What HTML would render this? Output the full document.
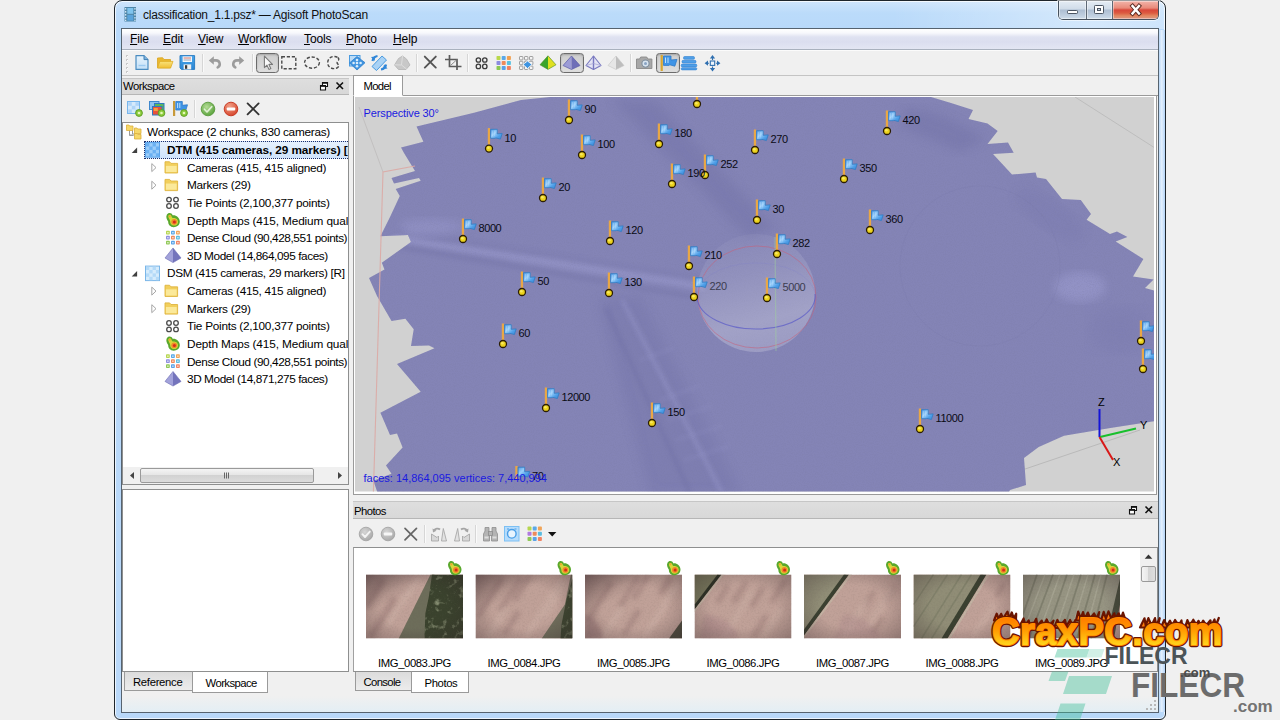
<!DOCTYPE html>
<html lang="en">
<head>
<meta charset="utf-8">
<title>classification_1.1.psz* — Agisoft PhotoScan</title>
<style>
html,body{margin:0;padding:0;}
body{width:1280px;height:720px;overflow:hidden;position:relative;background:#f0f0f0;font-family:"Liberation Sans",sans-serif;font-size:12px;color:#000;}
.a{position:absolute;}
.t{position:absolute;white-space:nowrap;line-height:14px;}
svg{position:absolute;overflow:visible;}
/* window frame */
#win{left:114px;top:0;width:1052px;height:720px;box-sizing:border-box;border:1px solid #1e252b;border-radius:8px 8px 6px 6px;background:linear-gradient(90deg,rgba(255,255,255,0) 74%,rgba(255,255,255,.38) 93%,rgba(255,255,255,.3) 100%) 0 0/100% 28px no-repeat,linear-gradient(#cfe5fc 0,#bbdbfa 12px,#b8d9fa 28px,#b9d8f9 100%);box-shadow:inset 0 0 0 1px rgba(255,255,255,.75);overflow:hidden;}
#client{left:121px;top:28px;width:1038px;height:685px;box-sizing:border-box;border:1px solid #56636f;background:#f0f0f0;}
#menubar{left:122px;top:29px;width:1036px;height:20px;background:linear-gradient(#ffffff 0,#f7f8fc 4px,#dfe2f1 8px,#dbdeef 13px,#e3e6f3 20px);border-bottom:1px solid #a9b1be;box-shadow:0 1px 0 #fbfbfb;}
.menu{top:32px;font-size:12px;letter-spacing:-.1px;}
.menu u{text-decoration:underline;text-underline-offset:1px;}
.sep{width:1px;background:#d6d6d6;border-right:1px solid #fafafa;}
.pressed{box-sizing:border-box;border:1.5px solid #6c6c6c;border-radius:3.5px;background:linear-gradient(#cdcdcd,#dedede);box-shadow:inset 0 1px 2px rgba(0,0,0,.2);}
.dockhead{background:linear-gradient(#dedede,#d8d8d8);border-top:1px solid #c6c6c6;border-bottom:1px solid #b6b6b6;box-sizing:border-box;}
.white{background:#fff;box-sizing:border-box;border:1px solid #8e8f8f;}
.tab{box-sizing:border-box;border:1px solid #9a9a9a;font-size:12px;}
.tab.on{background:#fff;}
.tab.off{background:linear-gradient(#dcdcdc,#ececec);}
.row{left:0;height:18px;font-size:12.2px;}
</style>
</head>
<body>
<!-- ===== window frame ===== -->
<div id="win" class="a"></div>
<div id="rframe" class="a" style="left:1159px;top:30px;width:6px;height:682px;background:linear-gradient(90deg,#b9d8f8,#e4f0fd 45%,#b4d4f7);"></div>
<div id="client" class="a"></div>

<!-- caption buttons -->
<div class="a" style="left:1058px;top:1px;width:101px;height:19px;box-sizing:border-box;border:1px solid #46515e;border-top:none;border-radius:0 0 5px 5px;overflow:hidden;background:#c6d4e4;box-shadow:0 0 0 1px rgba(255,255,255,.55);">
<div class="a" style="left:0;top:0;width:27px;height:18px;background:linear-gradient(#e4ecf4 0,#d0dce9 8px,#adbed2 9px,#bacadc 13px,#cedcea 18px);border-right:1px solid #5d6875;box-shadow:inset 0 0 0 1px rgba(255,255,255,.45);"></div>
<div class="a" style="left:28px;top:0;width:25px;height:18px;background:linear-gradient(#e4ecf4 0,#d0dce9 8px,#adbed2 9px,#bacadc 13px,#cedcea 18px);border-right:1px solid #5d6875;box-shadow:inset 0 0 0 1px rgba(255,255,255,.45);"></div>
<div class="a" style="left:54px;top:0;width:46px;height:18px;background:linear-gradient(#f2b4aa 0,#e98a7a 7px,#d8473a 9px,#dc5a40 12px,#e28a62 15px,#dc9484 18px);box-shadow:inset 0 0 0 1px rgba(255,255,255,.4);"></div>
</div>
<svg class="a" style="left:1058px;top:0;" width="101" height="20" viewBox="1058 0 101 20"><rect x="1067.5" y="10.5" width="10" height="3" rx=".8" fill="#fff" stroke="#4a5462" stroke-width="1"/><rect x="1094.5" y="5.5" width="9" height="8" rx=".8" fill="#fff" stroke="#4a5462" stroke-width="1"/><rect x="1097.5" y="8.5" width="3" height="2" fill="#c9d6e4" stroke="#4a5462" stroke-width="1"/><path d="M1132.5 6l6.5 7.500M1139 6l-6.5 7.5" stroke="#5a2a22" stroke-width="4.2" stroke-linecap="square"/><path d="M1132.5 6l6.5 7.500M1139 6l-6.5 7.5" stroke="#fff" stroke-width="2.4" stroke-linecap="square"/></svg>
<!-- app icon (film strip) -->
<svg class="a" style="left:124px;top:6px;" width="13" height="16" viewBox="124 6 13 16"><rect x="124.5" y="7" width="11.5" height="14.5" fill="#4f86a8"/><rect x="127.3" y="8" width="6" height="5.8" fill="#7fc4ee"/><rect x="127.3" y="14.8" width="6" height="5.8" fill="#5aa4dc"/><g fill="#cfe4f2"><rect x="125" y="8" width="1.3" height="1.6"/><rect x="125" y="11" width="1.3" height="1.6"/><rect x="125" y="14" width="1.3" height="1.6"/><rect x="125" y="17" width="1.3" height="1.6"/><rect x="125" y="19.7" width="1.3" height="1.3"/><rect x="134.3" y="8" width="1.3" height="1.6"/><rect x="134.3" y="11" width="1.3" height="1.6"/><rect x="134.3" y="14" width="1.3" height="1.6"/><rect x="134.3" y="17" width="1.3" height="1.6"/><rect x="134.3" y="19.7" width="1.3" height="1.3"/></g></svg>
<!-- title bar -->
<div class="t" style="left:143px;top:8px;font-size:12px;letter-spacing:-.23px;color:#111;">classification_1.1.psz* — Agisoft PhotoScan</div>

<!-- menubar -->
<div id="menubar" class="a"></div>
<div class="t menu" style="left:130px;"><u>F</u>ile</div>
<div class="t menu" style="left:163px;"><u>E</u>dit</div>
<div class="t menu" style="left:198px;"><u>V</u>iew</div>
<div class="t menu" style="left:238px;"><u>W</u>orkflow</div>
<div class="t menu" style="left:304px;"><u>T</u>ools</div>
<div class="t menu" style="left:346px;"><u>P</u>hoto</div>
<div class="t menu" style="left:393px;"><u>H</u>elp</div>

<!-- main toolbar line -->
<div class="a" style="left:122px;top:75px;width:1036px;height:1px;background:#c4c4c4;"></div>
<div class="a sep" style="left:202px;top:54px;height:18px;"></div>
<div class="a sep" style="left:252px;top:54px;height:18px;"></div>
<div class="a sep" style="left:416px;top:54px;height:18px;"></div>
<div class="a sep" style="left:467px;top:54px;height:18px;"></div>
<div class="a sep" style="left:630px;top:54px;height:18px;"></div>
<div class="a pressed" style="left:256px;top:53px;width:23px;height:20px;"></div>
<div class="a pressed" style="left:560px;top:53px;width:24px;height:20px;"></div>
<div class="a pressed" style="left:656px;top:53px;width:24px;height:20px;"></div>
<svg class="a" style="left:122px;top:50px;" width="620" height="26" viewBox="122 50 620 26">
<defs>
<linearGradient id="gDoc" x1="0" y1="0" x2="0" y2="1"><stop offset="0" stop-color="#e6f3fd"/><stop offset="1" stop-color="#c3e0f7"/></linearGradient>
<linearGradient id="gFold" x1="0" y1="0" x2="0" y2="1"><stop offset="0" stop-color="#f9e27a"/><stop offset="1" stop-color="#f0bf35"/></linearGradient>
<linearGradient id="gBlue" x1="0" y1="0" x2="0" y2="1"><stop offset="0" stop-color="#4aa6ea"/><stop offset="1" stop-color="#2a86d4"/></linearGradient>
<linearGradient id="gPur" x1="0" y1="0" x2="1" y2="0"><stop offset="0" stop-color="#9a9ad4"/><stop offset=".5" stop-color="#8484c6"/><stop offset=".5" stop-color="#6c6cb4"/><stop offset="1" stop-color="#7c7cc0"/></linearGradient>
</defs>
<rect x="126" y="55" width="2" height="2" fill="#c9c9c9"/><rect x="127" y="56" width="1" height="1" fill="#fff"/>
<rect x="126" y="59" width="2" height="2" fill="#c9c9c9"/><rect x="127" y="60" width="1" height="1" fill="#fff"/>
<rect x="126" y="63" width="2" height="2" fill="#c9c9c9"/><rect x="127" y="64" width="1" height="1" fill="#fff"/>
<rect x="126" y="67" width="2" height="2" fill="#c9c9c9"/><rect x="127" y="68" width="1" height="1" fill="#fff"/>
<rect x="126" y="71" width="2" height="2" fill="#c9c9c9"/><rect x="127" y="72" width="1" height="1" fill="#fff"/>
<path d="M136 55.6h8l4 4v9.8h-12z" fill="url(#gDoc)" stroke="#4a8cc0" stroke-width="1.2" stroke-linejoin="round"/><path d="M144 55.6v4h4" fill="#7fb2dc" stroke="#3f7fb4" stroke-width="1"/><path d="M138.5 65.5h7" stroke="#9ccaf0" stroke-width="1.4"/>
<path d="M157.5 58v9.8h13V59.5h-6.5l-1.4-1.8z" fill="#eab830" stroke="#d9a520" stroke-width=".8"/><path d="M157.6 68l2.2-6.6h13.2l-2.4 6.6z" fill="url(#gFold)" stroke="#dfae28" stroke-width=".8" stroke-linejoin="round"/>
<path d="M180 55.6h14.6v13.8H181.4L180 68z" fill="url(#gBlue)" stroke="#2f7fc4" stroke-width="1"/><rect x="182.6" y="56.4" width="9.4" height="5.6" fill="#f4f8fc"/><path d="M183.6 58h7.4" stroke="#d06a5a" stroke-width=".9"/><path d="M183.6 60h7.4" stroke="#8a9ab0" stroke-width=".9"/><rect x="183.6" y="64.4" width="7.6" height="5" fill="#f0f0f0"/><rect x="185" y="65.2" width="2.2" height="3.6" fill="#3a3a3a"/>
<path d="M212.5 60.4h3.6a3.7 3.7 0 0 1 1.6 7" fill="none" stroke="#9c9c9c" stroke-width="2.6" stroke-linecap="round"/><path d="M208.8 60.6l5-4.4v8.600z" fill="#9c9c9c"/>
<path d="M240.5 60.4h-3.6a3.7 3.7 0 0 0-1.6 7" fill="none" stroke="#9c9c9c" stroke-width="2.6" stroke-linecap="round"/><path d="M244.200 60.6l-5-4.4v8.600z" fill="#9c9c9c"/>
<path d="M264.4 56.2v11.4l2.6-2.5 1.9 4.3 1.9-.8-1.9-4.2h3.6z" fill="#fafafa" stroke="#7a7a7a" stroke-width="1.1" stroke-linejoin="round"/>
<rect x="281.8" y="56.8" width="14" height="12" fill="none" stroke="#4a4a4a" stroke-width="1.4" stroke-dasharray="3.2 1.8"/>
<ellipse cx="312" cy="62.6" rx="7.4" ry="5.6" fill="none" stroke="#4a4a4a" stroke-width="1.4" stroke-dasharray="3.2 1.8"/>
<path d="M337.5 57.4c-4-2.4-9.6-.2-9.8 5.2-.2 5 5.6 7.6 9.8 5.0 1.4-1 1.8-2.2.6-3.2-1.4-1.2-1.4-2.8 0-3.8 1.2-1 .8-2.4-.6-3.200z" fill="none" stroke="#4a4a4a" stroke-width="1.4" stroke-dasharray="3.2 1.8"/>
<rect x="349.5" y="55.5" width="10.5" height="10.5" fill="#bcdcf7" stroke="#4a9be0" stroke-width="1"/><path d="M357 56.500l8 6.2-8 7.3-7.5-7z" fill="#3f94e0" stroke="#2f7fcb" stroke-width=".8"/><g fill="#d9ecfb"><circle cx="357" cy="60" r="1.3"/><circle cx="353.6" cy="63" r="1.3"/><circle cx="360.6" cy="63" r="1.3"/><circle cx="357" cy="66.2" r="1.3"/><circle cx="357" cy="63" r="1.3"/></g>
<path d="M372 66.500l10-10.5 4.5 4-10 10.500z" fill="#a9d2f5" stroke="#4a9be0" stroke-width="1"/><path d="M372.5 61a6 6 0 0 1 5-5" fill="none" stroke="#2f86d8" stroke-width="2.2"/><path d="M386 64.500a6 6 0 0 1-5 5" fill="none" stroke="#2f86d8" stroke-width="2.2"/><path d="M371 57l4.5-.5-1 4.500z" fill="#2f86d8"/><path d="M387.5 68.500l-4.5.5 1-4.500z" fill="#2f86d8"/>
<path d="M394.5 65l4-6.5 4-2.5 4 3 3.5 6-4 4.500h-7.500z" fill="#c8c8c8" stroke="#b4b4b4" stroke-width=".8"/><path d="M402.5 56l-1 9 5 4M401.5 65l-7-.2" stroke="#dedede" stroke-width="1" fill="none"/>
<path d="M424.8 56.600l11 11M435.8 56.600l-11 11" stroke="#555" stroke-width="1.9" stroke-linecap="round"/>
<path d="M449.5 55v11.500h12M445 59.500h12V70" fill="none" stroke="#5a5a5a" stroke-width="1.7"/><path d="M450.5 65.500l6-5.5" stroke="#8a8a8a" stroke-width="1"/>
<circle cx="478.4" cy="60" r="2.2" fill="none" stroke="#3c3c3c" stroke-width="1.3"/>
<circle cx="478.4" cy="66.4" r="2.2" fill="none" stroke="#3c3c3c" stroke-width="1.3"/>
<circle cx="484.8" cy="60" r="2.2" fill="none" stroke="#3c3c3c" stroke-width="1.3"/>
<circle cx="484.8" cy="66.4" r="2.2" fill="none" stroke="#3c3c3c" stroke-width="1.3"/>
<rect x="496.5" y="56.0" width="4" height="4" rx=".8" fill="#b8d84a"/>
<rect x="501.7" y="56.0" width="4" height="4" rx=".8" fill="#5aa8e8"/>
<rect x="506.9" y="56.0" width="4" height="4" rx=".8" fill="#f0a050"/>
<rect x="496.5" y="61.0" width="4" height="4" rx=".8" fill="#8c8ce0"/>
<rect x="501.7" y="61.0" width="4" height="4" rx=".8" fill="#f08a5a"/>
<rect x="506.9" y="61.0" width="4" height="4" rx=".8" fill="#5ac0e0"/>
<rect x="496.5" y="66.0" width="4" height="4" rx=".8" fill="#8cc850"/>
<rect x="501.7" y="66.0" width="4" height="4" rx=".8" fill="#5aa0e8"/>
<rect x="506.9" y="66.0" width="4" height="4" rx=".8" fill="#f08060"/>
<rect x="519.5" y="56.5" width="3.4" height="3.4" rx=".6" fill="#f4f4f4" stroke="#8a8a8a" stroke-width=".8"/>
<rect x="524.5" y="56.5" width="3.4" height="3.4" rx=".6" fill="#f4f4f4" stroke="#8a8a8a" stroke-width=".8"/>
<rect x="529.5" y="56.5" width="3.4" height="3.4" rx=".6" fill="#f4f4f4" stroke="#8a8a8a" stroke-width=".8"/>
<rect x="519.5" y="61.3" width="3.4" height="3.4" rx=".6" fill="#f4f4f4" stroke="#8a8a8a" stroke-width=".8"/>
<rect x="524.5" y="61.3" width="3.4" height="3.4" rx=".6" fill="#f4f4f4" stroke="#8a8a8a" stroke-width=".8"/>
<rect x="529.5" y="61.3" width="3.4" height="3.4" rx=".6" fill="#f4f4f4" stroke="#8a8a8a" stroke-width=".8"/>
<rect x="519.5" y="66.1" width="3.4" height="3.4" rx=".6" fill="#f4f4f4" stroke="#8a8a8a" stroke-width=".8"/>
<rect x="524.5" y="66.1" width="3.4" height="3.4" rx=".6" fill="#f4f4f4" stroke="#8a8a8a" stroke-width=".8"/>
<rect x="529.5" y="66.1" width="3.4" height="3.4" rx=".6" fill="#f4f4f4" stroke="#8a8a8a" stroke-width=".8"/>
<path d="M523 64.500l4.5-3.5 4.5 3.5-4.5 4z" fill="#3f94e0" stroke="#fff" stroke-width=".8"/>
<path d="M548 55.800l-8 9 8 4.600z" fill="#3aa52a"/><path d="M548 55.800l8 9-8 4.600z" fill="#e0e020"/><path d="M548 55.800l-8 9 8 4.6 8-4.600z" fill="none" stroke="#4a8a20" stroke-width=".6"/>
<path d="M571.5 56l-8.5 9.5 8.5 4z" fill="#9c9cd6"/><path d="M571.5 56l8.5 9.5-8.5 4z" fill="#6e6eb8"/><path d="M571.5 56l-8.5 9.5 8.5 4 8.5-4z" fill="none" stroke="#5a5aa8" stroke-width=".7"/>
<path d="M593.5 56l-7.5 9.5 7.5 4 7.5-4z" fill="#e4e4f4" stroke="#7a7ac0" stroke-width="1.1" stroke-linejoin="round"/><path d="M593.5 56v13.5" stroke="#7a7ac0" stroke-width="1.4"/><path d="M586 65.500l7.5-2 7.5 2" stroke="#a4a4d4" stroke-width=".7" fill="none"/>
<path d="M616 56l-8 9.5 8 4z" fill="#e6e6e6"/><path d="M616 56l8 9.5-8 4z" fill="#bdbdbd"/><path d="M616 56l-8 9.5 8 4 8-4z" fill="none" stroke="#c4c4c4" stroke-width=".6"/>
<path d="M636.5 59h3l1.2-2h6l1.2 2h4v9.500h-15.400z" fill="#a8a8a8" stroke="#8a8a8a" stroke-width=".9"/><circle cx="645.5" cy="63.6" r="3.6" fill="#d8e4f0" stroke="#7e8e9e" stroke-width="1.1"/><circle cx="645.5" cy="63.6" r="1.5" fill="#8aa4c4"/>
<rect x="660.6" y="55" width="2.2" height="16" fill="#d8a630"/><path d="M663.5 56h7.500v4l6-.6-2.2 6.8-5-1.4-.8.600h-5.500z" fill="#3f94e6" stroke="#2f7ac8" stroke-width=".8"/><path d="M665.5 57.500v5.500M668 57.500v5.5" stroke="#bfe0fb" stroke-width="1"/>
<g fill="#4f9fe8" stroke="#2f80d0" stroke-width=".6"><rect x="683.5" y="56.5" width="11" height="2.8" rx="1.2"/><rect x="682" y="60.3" width="14" height="2.8" rx="1.2"/><rect x="681.2" y="64.1" width="15.6" height="2.8" rx="1.2"/><rect x="681.2" y="67.7" width="15.6" height="2.2" rx="1"/></g>
<rect x="710.3" y="61" width="4.4" height="4.4" fill="#eef6fd" stroke="#2f6fb0" stroke-width="1.1"/><g fill="#2f6fb0"><path d="M712.5 55l2.6 3.400h-5.200z"/><path d="M712.5 71.400l2.6-3.400h-5.200z"/><path d="M704.6 63.200l3.4-2.600v5.200z"/><path d="M720.4 63.200l-3.4-2.600v5.200z"/></g><path d="M712.5 57v3M712.5 66.400v3M706.5 63.200h2.500M716 63.200h2.5" stroke="#2f6fb0" stroke-width="1.1"/>
</svg>

<!-- ===== workspace dock ===== -->
<div class="a dockhead" style="left:122px;top:78px;width:227px;height:17px;"></div>
<div class="t" style="left:123px;top:78.5px;font-size:11.3px;letter-spacing:-.53px;">Workspace</div>
<div class="a sep" style="left:194px;top:100px;height:18px;"></div>
<svg class="a" style="left:122px;top:96px;" width="227" height="26" viewBox="122 96 227 26">
<defs><radialGradient id="gGrn" cx=".4" cy=".35" r=".7"><stop offset="0" stop-color="#b4dc96"/><stop offset="1" stop-color="#56a038"/></radialGradient>
<radialGradient id="gRed" cx=".4" cy=".3" r=".8"><stop offset="0" stop-color="#f2a088"/><stop offset="1" stop-color="#d23c22"/></radialGradient>
<g id="plus"><circle r="3.4" fill="#8ccc3c" stroke="#5a9a22" stroke-width=".9"/><circle r="1.3" fill="#e4f6b8"/></g></defs>
<rect x="127.5" y="101.5" width="12" height="12" fill="#d6eafb" stroke="#78b6ec" stroke-width="1"/>
<rect x="128.2" y="102.2" width="3.6" height="3.6" fill="#aed4f8"/>
<rect x="135.4" y="102.2" width="3.6" height="3.6" fill="#aed4f8"/>
<rect x="131.8" y="105.8" width="3.6" height="3.6" fill="#aed4f8"/>
<rect x="128.2" y="109.4" width="3.6" height="3.6" fill="#aed4f8"/>
<rect x="135.4" y="109.4" width="3.6" height="3.6" fill="#aed4f8"/>
<use href="#plus" x="139" y="113"/>
<rect x="149.5" y="101.5" width="9.5" height="8" fill="#8cc4f0" stroke="#3f88cc" stroke-width="1"/><rect x="154.5" y="103.5" width="9.5" height="8" fill="#5ab85a" stroke="#2f78c0" stroke-width="1"/><rect x="152.5" y="106.5" width="9.5" height="8.5" fill="#e8503a" stroke="#2f78c0" stroke-width="1"/><rect x="153.8" y="108" width="4" height="3" fill="#f4a040"/><use href="#plus" x="161.5" y="113"/>
<rect x="173" y="101" width="2.2" height="15" fill="#c89a3a"/><path d="M175.8 101.500h6.500v3.800l5.2-.5-1.8 5.8-4.6-1.2-.8.600h-4.500z" fill="#3f94e6" stroke="#2f7ac8" stroke-width=".8"/><path d="M177.6 103v5M179.8 103v5" stroke="#bfe0fb" stroke-width="1"/><use href="#plus" x="184" y="113"/>
<circle cx="208" cy="109" r="6.8" fill="url(#gGrn)" stroke="#5a9a3e" stroke-width=".9"/><path d="M204.4 109.200l2.6 2.8 4.8-5.4" fill="none" stroke="#eef8e6" stroke-opacity=".85" stroke-width="1.6" stroke-linecap="round" stroke-linejoin="round"/>
<circle cx="231" cy="109" r="6.8" fill="url(#gRed)" stroke="#c4321c" stroke-width=".9"/><rect x="226.8" y="107.5" width="8.4" height="3" rx=".8" fill="#fff"/>
<path d="M247.6 103.400l11 11M258.6 103.400l-11 11" stroke="#333" stroke-width="1.8" stroke-linecap="round"/>
</svg>
<svg class="a" style="left:316px;top:78px;" width="32" height="16" viewBox="316 78 32 16"><path d="M322.5 82.500h5v4h-5zM322.5 83.300h5" fill="#fff" stroke="#111" stroke-width="1.1"/><path d="M320.5 85.500h5v4.500h-5z" fill="#fff" stroke="#111" stroke-width="1.1"/><path d="M320.5 86.300h5" stroke="#111" stroke-width="1.1"/><path d="M336.5 82.500l6.5 6.500M343 82.500l-6.5 6.5" stroke="#111" stroke-width="1.6"/></svg>
<div class="a white" style="left:122px;top:122px;width:227px;height:363px;"></div>
<div class="a" style="left:144px;top:141px;width:204px;height:18px;box-sizing:border-box;background:linear-gradient(#e6f1fd,#cfe3fb);border:1px dotted #1d2f6a;border-right:none;"></div>
<svg class="a" style="left:123px;top:123px;" width="225" height="344" viewBox="123 123 225 344">
<path d="M129.5 130.5v4.500h4M129.5 130.5v5h4" fill="none" stroke="#9a9a9a" stroke-width="1"/><path d="M132.5 127.5v6.500h4.5" fill="none" stroke="#9a9a9a" stroke-width="1"/><path d="M126.5 125.0h2.400l.8 1h3.300v4.500h-6.500z" fill="#f6d868" stroke="#dcae3a" stroke-width=".8"/><path d="M134.5 128.0h2.400l.8 1h3.300v4.500h-6.500z" fill="#f6d868" stroke="#dcae3a" stroke-width=".8"/><path d="M134.5 133.5h2.400l.8 1h3.300v4.500h-6.500z" fill="#f6d868" stroke="#dcae3a" stroke-width=".8"/>
<path d="M137.1 152.9v-5.4l-5.4 5.4z" fill="#404040"/>
<rect x="145.5" y="142.6" width="14" height="14.5" fill="#9accf9" stroke="#58a2ea" stroke-width="1"/><rect x="146.0" y="143.1" width="3.3" height="3.4" fill="#6ab0f2"/><rect x="152.6" y="143.1" width="3.3" height="3.4" fill="#6ab0f2"/><rect x="149.3" y="146.5" width="3.3" height="3.4" fill="#6ab0f2"/><rect x="155.9" y="146.5" width="3.3" height="3.4" fill="#6ab0f2"/><rect x="146.0" y="149.9" width="3.3" height="3.4" fill="#6ab0f2"/><rect x="152.6" y="149.9" width="3.3" height="3.4" fill="#6ab0f2"/><rect x="149.3" y="153.3" width="3.3" height="3.4" fill="#6ab0f2"/><rect x="155.9" y="153.3" width="3.3" height="3.4" fill="#6ab0f2"/>
<path d="M151.8 163.6v8l4.2-4z" fill="#fff" stroke="#a6a6a6" stroke-width="1" stroke-linejoin="round"/>
<path d="M165.0 161.78h4.6l1.4 1.6h6.6v9.6h-12.600z" fill="#f2cf5c" stroke="#dfb440" stroke-width=".9" stroke-linejoin="round"/><path d="M165.9 165.88h10.800v6.200h-10.800z" fill="#fbe99a"/>
<path d="M151.8 181.2v8l4.2-4z" fill="#fff" stroke="#a6a6a6" stroke-width="1" stroke-linejoin="round"/>
<path d="M165.0 179.42000000000002h4.6l1.4 1.6h6.6v9.6h-12.600z" fill="#f2cf5c" stroke="#dfb440" stroke-width=".9" stroke-linejoin="round"/><path d="M165.9 183.52h10.800v6.200h-10.800z" fill="#fbe99a"/>
<circle cx="169.0" cy="199.6" r="2.3" fill="#fff" stroke="#4a4a4a" stroke-width="1.3"/><circle cx="169.0" cy="206.0" r="2.3" fill="#fff" stroke="#4a4a4a" stroke-width="1.3"/><circle cx="176.0" cy="199.6" r="2.3" fill="#fff" stroke="#4a4a4a" stroke-width="1.3"/><circle cx="176.0" cy="206.0" r="2.3" fill="#fff" stroke="#4a4a4a" stroke-width="1.3"/>
<g transform="translate(165.8 212.2)"><path d="M1 2.500c1.5-2.6 5-2 5.8.6 3-.600 7.2 2 7.2 6.2 0 3.6-3 5.7-6 5.7-3.6 0-5.8-2.6-5.6-5.600C1 7.4-.2 4.6 1 2.500z" fill="#5aa82c"/><path d="M2.6 3.400c1-1.4 2.8-.8 3.2.8.6 1.6 1.4 1.6 2.6 1.6 2.4.2 4 2 3.8 4.2-.2 2.2-2 3.4-4 3.4-2.4 0-4-1.8-3.8-4C4.4 7.4 1.8 5.4 2.6 3.400z" fill="#d8d83a"/><circle cx="8.4" cy="9.6" r="2.9" fill="#f08a28"/><circle cx="8.6" cy="9.8" r="1.5" fill="#d82a1c"/><circle cx="3.9" cy="4" r="1" fill="#f0a030"/></g>
<rect x="166.0" y="230.8" width="3.8" height="3.8" rx=".8" fill="#b6d650"/><rect x="167.2" y="232.0" width="1.4" height="1.4" fill="#fff" opacity=".75"/><rect x="171.0" y="230.8" width="3.8" height="3.8" rx=".8" fill="#5aa8e8"/><rect x="172.2" y="232.0" width="1.4" height="1.4" fill="#fff" opacity=".75"/><rect x="176.0" y="230.8" width="3.8" height="3.8" rx=".8" fill="#f0a458"/><rect x="177.2" y="232.0" width="1.4" height="1.4" fill="#fff" opacity=".75"/><rect x="166.0" y="235.8" width="3.8" height="3.8" rx=".8" fill="#8e8ee0"/><rect x="167.2" y="237.0" width="1.4" height="1.4" fill="#fff" opacity=".75"/><rect x="171.0" y="235.8" width="3.8" height="3.8" rx=".8" fill="#ee8a5c"/><rect x="172.2" y="237.0" width="1.4" height="1.4" fill="#fff" opacity=".75"/><rect x="176.0" y="235.8" width="3.8" height="3.8" rx=".8" fill="#5abce0"/><rect x="177.2" y="237.0" width="1.4" height="1.4" fill="#fff" opacity=".75"/><rect x="166.0" y="240.8" width="3.8" height="3.8" rx=".8" fill="#90c856"/><rect x="167.2" y="242.0" width="1.4" height="1.4" fill="#fff" opacity=".75"/><rect x="171.0" y="240.8" width="3.8" height="3.8" rx=".8" fill="#5aa2e8"/><rect x="172.2" y="242.0" width="1.4" height="1.4" fill="#fff" opacity=".75"/><rect x="176.0" y="240.8" width="3.8" height="3.8" rx=".8" fill="#f08464"/><rect x="177.2" y="242.0" width="1.4" height="1.4" fill="#fff" opacity=".75"/>
<path d="M173 247.98000000000002l-8 10 8 4.600z" fill="#a2a2da"/><path d="M173 247.98000000000002l8 10-8 4.600z" fill="#7474bc"/><path d="M173 247.98000000000002l-8 10 8 4.6 8-4.600z" fill="none" stroke="#6a6ab4" stroke-width=".6" stroke-linejoin="round"/>
<path d="M137.1 276.4v-5.4l-5.4 5.4z" fill="#404040"/>
<rect x="145.5" y="266.1" width="14" height="14.5" fill="#d6ecfc" stroke="#7ab6e8" stroke-width="1"/><rect x="146.0" y="266.6" width="3.3" height="3.4" fill="#b4daf8"/><rect x="152.6" y="266.6" width="3.3" height="3.4" fill="#b4daf8"/><rect x="149.3" y="270.0" width="3.3" height="3.4" fill="#b4daf8"/><rect x="155.9" y="270.0" width="3.3" height="3.4" fill="#b4daf8"/><rect x="146.0" y="273.4" width="3.3" height="3.4" fill="#b4daf8"/><rect x="152.6" y="273.4" width="3.3" height="3.4" fill="#b4daf8"/><rect x="149.3" y="276.8" width="3.3" height="3.4" fill="#b4daf8"/><rect x="155.9" y="276.8" width="3.3" height="3.4" fill="#b4daf8"/>
<path d="M151.8 287.1v8l4.2-4z" fill="#fff" stroke="#a6a6a6" stroke-width="1" stroke-linejoin="round"/>
<path d="M165.0 285.26h4.6l1.4 1.6h6.6v9.6h-12.600z" fill="#f2cf5c" stroke="#dfb440" stroke-width=".9" stroke-linejoin="round"/><path d="M165.9 289.36h10.800v6.200h-10.800z" fill="#fbe99a"/>
<path d="M151.8 304.7v8l4.2-4z" fill="#fff" stroke="#a6a6a6" stroke-width="1" stroke-linejoin="round"/>
<path d="M165.0 302.90000000000003h4.6l1.4 1.6h6.6v9.6h-12.600z" fill="#f2cf5c" stroke="#dfb440" stroke-width=".9" stroke-linejoin="round"/><path d="M165.9 307.00000000000006h10.800v6.200h-10.800z" fill="#fbe99a"/>
<circle cx="169.0" cy="323.0" r="2.3" fill="#fff" stroke="#4a4a4a" stroke-width="1.3"/><circle cx="169.0" cy="329.4" r="2.3" fill="#fff" stroke="#4a4a4a" stroke-width="1.3"/><circle cx="176.0" cy="323.0" r="2.3" fill="#fff" stroke="#4a4a4a" stroke-width="1.3"/><circle cx="176.0" cy="329.4" r="2.3" fill="#fff" stroke="#4a4a4a" stroke-width="1.3"/>
<g transform="translate(165.8 335.7)"><path d="M1 2.500c1.5-2.6 5-2 5.8.6 3-.600 7.2 2 7.2 6.2 0 3.6-3 5.7-6 5.7-3.6 0-5.8-2.6-5.6-5.600C1 7.4-.2 4.6 1 2.500z" fill="#5aa82c"/><path d="M2.6 3.400c1-1.4 2.8-.8 3.2.8.6 1.6 1.4 1.6 2.6 1.6 2.4.2 4 2 3.8 4.2-.2 2.2-2 3.4-4 3.4-2.4 0-4-1.8-3.8-4C4.4 7.4 1.8 5.4 2.6 3.400z" fill="#d8d83a"/><circle cx="8.4" cy="9.6" r="2.9" fill="#f08a28"/><circle cx="8.6" cy="9.8" r="1.5" fill="#d82a1c"/><circle cx="3.9" cy="4" r="1" fill="#f0a030"/></g>
<rect x="166.0" y="354.3" width="3.8" height="3.8" rx=".8" fill="#b6d650"/><rect x="167.2" y="355.5" width="1.4" height="1.4" fill="#fff" opacity=".75"/><rect x="171.0" y="354.3" width="3.8" height="3.8" rx=".8" fill="#5aa8e8"/><rect x="172.2" y="355.5" width="1.4" height="1.4" fill="#fff" opacity=".75"/><rect x="176.0" y="354.3" width="3.8" height="3.8" rx=".8" fill="#f0a458"/><rect x="177.2" y="355.5" width="1.4" height="1.4" fill="#fff" opacity=".75"/><rect x="166.0" y="359.3" width="3.8" height="3.8" rx=".8" fill="#8e8ee0"/><rect x="167.2" y="360.5" width="1.4" height="1.4" fill="#fff" opacity=".75"/><rect x="171.0" y="359.3" width="3.8" height="3.8" rx=".8" fill="#ee8a5c"/><rect x="172.2" y="360.5" width="1.4" height="1.4" fill="#fff" opacity=".75"/><rect x="176.0" y="359.3" width="3.8" height="3.8" rx=".8" fill="#5abce0"/><rect x="177.2" y="360.5" width="1.4" height="1.4" fill="#fff" opacity=".75"/><rect x="166.0" y="364.3" width="3.8" height="3.8" rx=".8" fill="#90c856"/><rect x="167.2" y="365.5" width="1.4" height="1.4" fill="#fff" opacity=".75"/><rect x="171.0" y="364.3" width="3.8" height="3.8" rx=".8" fill="#5aa2e8"/><rect x="172.2" y="365.5" width="1.4" height="1.4" fill="#fff" opacity=".75"/><rect x="176.0" y="364.3" width="3.8" height="3.8" rx=".8" fill="#f08464"/><rect x="177.2" y="365.5" width="1.4" height="1.4" fill="#fff" opacity=".75"/>
<path d="M173 371.46l-8 10 8 4.600z" fill="#a2a2da"/><path d="M173 371.46l8 10-8 4.600z" fill="#7474bc"/><path d="M173 371.46l-8 10 8 4.6 8-4.600z" fill="none" stroke="#6a6ab4" stroke-width=".6" stroke-linejoin="round"/>
</svg>
<div class="t" style="left:147px;top:125.3px;width:201px;overflow:hidden;font-size:11.8px;letter-spacing:-0.27px;">Workspace (2 chunks, 830 cameras)</div>
<div class="t" style="left:167px;top:142.9px;width:181px;overflow:hidden;font-size:11.8px;letter-spacing:-0.10px;font-weight:bold;">DTM (415 cameras, 29 markers) [R]</div>
<div class="t" style="left:187px;top:160.6px;width:161px;overflow:hidden;font-size:11.8px;letter-spacing:-0.27px;">Cameras (415, 415 aligned)</div>
<div class="t" style="left:187px;top:178.2px;width:161px;overflow:hidden;font-size:11.8px;letter-spacing:-0.27px;">Markers (29)</div>
<div class="t" style="left:187px;top:195.9px;width:161px;overflow:hidden;font-size:11.8px;letter-spacing:-0.27px;">Tie Points (2,100,377 points)</div>
<div class="t" style="left:187px;top:213.5px;width:161px;overflow:hidden;font-size:11.8px;letter-spacing:-0.12px;">Depth Maps (415, Medium quality)</div>
<div class="t" style="left:187px;top:231.1px;width:161px;overflow:hidden;font-size:11.8px;letter-spacing:-0.42px;">Dense Cloud (90,428,551 points)</div>
<div class="t" style="left:187px;top:248.8px;width:161px;overflow:hidden;font-size:11.8px;letter-spacing:-0.42px;">3D Model (14,864,095 faces)</div>
<div class="t" style="left:167px;top:266.4px;width:181px;overflow:hidden;font-size:11.8px;letter-spacing:-0.36px;">DSM (415 cameras, 29 markers) [R]</div>
<div class="t" style="left:187px;top:284.1px;width:161px;overflow:hidden;font-size:11.8px;letter-spacing:-0.27px;">Cameras (415, 415 aligned)</div>
<div class="t" style="left:187px;top:301.7px;width:161px;overflow:hidden;font-size:11.8px;letter-spacing:-0.27px;">Markers (29)</div>
<div class="t" style="left:187px;top:319.3px;width:161px;overflow:hidden;font-size:11.8px;letter-spacing:-0.27px;">Tie Points (2,100,377 points)</div>
<div class="t" style="left:187px;top:337.0px;width:161px;overflow:hidden;font-size:11.8px;letter-spacing:-0.12px;">Depth Maps (415, Medium quality)</div>
<div class="t" style="left:187px;top:354.6px;width:161px;overflow:hidden;font-size:11.8px;letter-spacing:-0.42px;">Dense Cloud (90,428,551 points)</div>
<div class="t" style="left:187px;top:372.3px;width:161px;overflow:hidden;font-size:11.8px;letter-spacing:-0.42px;">3D Model (14,871,275 faces)</div>
<div class="a" style="left:123px;top:467px;width:225px;height:17px;background:#f0f0f0;"></div>
<div class="a" style="left:140px;top:468px;width:174px;height:15px;box-sizing:border-box;border:1px solid #9a9a9a;border-radius:2px;background:linear-gradient(#f4f4f4 0,#e6e6e6 45%,#d2d2d2 50%,#dcdcdc 100%);"></div>
<svg class="a" style="left:123px;top:467px;" width="225" height="17" viewBox="123 467 225 17"><path d="M130 475.500l4-3.500v7z" fill="#444"/><path d="M342 475.500l-4-3.500v7z" fill="#444"/><path d="M224.5 472.500v6M226.5 472.500v6M228.5 472.500v6" stroke="#666" stroke-width="1"/></svg>
<div class="a white" style="left:122px;top:489px;width:227px;height:183px;"></div>
<div class="a tab off" style="left:124px;top:672px;width:69px;height:19px;border-top:none;"></div>
<div class="t" style="left:133px;top:675px;font-size:11.3px;letter-spacing:-.3px;">Reference</div>
<div class="a tab on" style="left:192px;top:671px;width:76px;height:22px;border-top-color:#8e8f8f;"></div>
<div class="t" style="left:205.5px;top:676px;font-size:11.3px;letter-spacing:-.55px;">Workspace</div>

<!-- ===== model tab ===== -->
<div class="a" style="left:353px;top:95px;width:805px;height:1px;background:#9a9a9a;"></div>
<div class="a tab on" style="left:353px;top:75px;width:50px;height:21px;border-bottom:1px solid #fff;"></div>
<div class="t" style="left:363.5px;top:79px;font-size:11.3px;letter-spacing:-.7px;">Model</div>
<div class="a" style="left:353px;top:96px;width:804px;height:399px;box-sizing:border-box;border:1px solid #9a9a9a;border-top:none;background:#fff;"></div>
<svg class="a" style="left:355px;top:97px;" width="799" height="394.5" viewBox="355 97 799 394.5">
<defs>
<clipPath id="mv"><rect x="355" y="97" width="799" height="394.5"/></clipPath>
<linearGradient id="ball" x1=".3" y1="0" x2=".55" y2="1"><stop offset="0" stop-color="#e8e8f0" stop-opacity=".04"/><stop offset=".35" stop-color="#e8e8f0" stop-opacity=".14"/><stop offset=".75" stop-color="#e8e8f0" stop-opacity=".3"/><stop offset="1" stop-color="#e8e8f0" stop-opacity=".24"/></linearGradient>
<linearGradient id="flg" x1="0" y1="0" x2="1" y2="1"><stop offset="0" stop-color="#4a98e4"/><stop offset=".38" stop-color="#9ccffa"/><stop offset=".7" stop-color="#4f9fe8"/><stop offset="1" stop-color="#3a88d6"/></linearGradient>
<filter id="b2"><feGaussianBlur stdDeviation="2"/></filter>
<filter id="b5"><feGaussianBlur stdDeviation="5"/></filter>
<filter id="b9"><feGaussianBlur stdDeviation="9"/></filter>
<filter id="grain" x="0" y="0" width="1" height="1"><feTurbulence type="fractalNoise" baseFrequency=".9" numOctaves="2" seed="3" result="n"/><feColorMatrix type="matrix" values="0 0 0 0 .2  0 0 0 0 .2  0 0 0 0 .35  0 0 0 -1.6 .9"/></filter>
<g id="mkf"><rect x="-1.2" y="-20.5" width="2.3" height="14" fill="#e8a746"/><path d="M1.6-19.3h6.6v4.6l5-.4-1.8 5.6-4.6-1.2-.6.4H1.6z" fill="url(#flg)" stroke="#2f7cc4" stroke-width=".8"/></g>
<g id="mk"><rect x="-1.2" y="-20.500" width="2.300" height="16.500" fill="#e8a746"/><path d="M1.6-19.300h6.600v4.600l5-.4-1.800 5.600-4.600-1.200-.6.4H1.600z" fill="url(#flg)" stroke="#2f7cc4" stroke-width=".8"/><path d="M3.400-17.900v5.400M5.600-17.900v5.400" stroke="#c4e4fc" stroke-width=".8" opacity=".45"/><circle r="3.5" fill="#ecd21c" stroke="#2b1d05" stroke-width="1.3"/><circle cx="-.6" cy="-.8" r="1.3" fill="#f8e860"/></g>
</defs>
<g clip-path="url(#mv)">
<rect x="355" y="97" width="800" height="396" fill="#d1d1d1"/>
<path d="M1075 97L1155 148" stroke="#bdbdbd" stroke-width="1" fill="none"/>
<path d="M978 485L1140 430" stroke="#b9b9b9" stroke-width="1" fill="none"/>
<path d="M359 107L383 172" stroke="#c2c0c0" stroke-width="1" fill="none"/>
<clipPath id="mesh"><path d="M377.6 493.0L373.4 480.7L391.5 473.8L386.0 465.4L402.6 447.4L397.0 433.5L390.0 435.0L380.4 412.7L420.7 391.8L397.0 364.0L434.5 348.2L429.0 345.4L411.0 346.0L413.7 329.3L405.4 318.8L391.5 321.0L377.0 296.0L369.0 278.0L384.5 269.6L381.8 262.7L411.0 242.0L408.0 235.0L380.4 236.3L390.0 217.0L399.8 196.0L395.7 189.0L420.7 180.7L419.0 178.0L394.0 183.5L391.5 178.0L415.0 171.0L404.0 153.0L401.0 147.4L423.4 141.8L416.5 126.5L474.0 112.7L521.0 100.0L560.0 96.0L927.7 96.0L951.0 103.0L973.0 110.0L968.5 119.0L987.5 123.5L997.7 131.0L987.5 144.0L1008.0 142.5L1013.7 152.7L993.0 154.0L1012.0 174.5L1035.6 172.5L1037.0 177.5L1046.0 179.0L1062.0 199.0L1080.8 200.0L1091.0 214.0L1086.6 219.7L1110.0 234.0L1117.0 231.4L1127.4 237.0L1115.7 241.6L1143.4 259.0L1133.0 276.6L1153.6 279.5L1145.0 288.0L1156.0 291.0L1156.0 421.0L1112.0 427.7L1064.0 435.7L1038.7 447.0L1024.0 458.0L1026.0 485.0L1010.0 490.0L1008.0 494.0Z"/></clipPath>
<path d="M377.6 493.0L373.4 480.7L391.5 473.8L386.0 465.4L402.6 447.4L397.0 433.5L390.0 435.0L380.4 412.7L420.7 391.8L397.0 364.0L434.5 348.2L429.0 345.4L411.0 346.0L413.7 329.3L405.4 318.8L391.5 321.0L377.0 296.0L369.0 278.0L384.5 269.6L381.8 262.7L411.0 242.0L408.0 235.0L380.4 236.3L390.0 217.0L399.8 196.0L395.7 189.0L420.7 180.7L419.0 178.0L394.0 183.5L391.5 178.0L415.0 171.0L404.0 153.0L401.0 147.4L423.4 141.8L416.5 126.5L474.0 112.7L521.0 100.0L560.0 96.0L927.7 96.0L951.0 103.0L973.0 110.0L968.5 119.0L987.5 123.5L997.7 131.0L987.5 144.0L1008.0 142.5L1013.7 152.7L993.0 154.0L1012.0 174.5L1035.6 172.5L1037.0 177.5L1046.0 179.0L1062.0 199.0L1080.8 200.0L1091.0 214.0L1086.6 219.7L1110.0 234.0L1117.0 231.4L1127.4 237.0L1115.7 241.6L1143.4 259.0L1133.0 276.6L1153.6 279.5L1145.0 288.0L1156.0 291.0L1156.0 421.0L1112.0 427.7L1064.0 435.7L1038.7 447.0L1024.0 458.0L1026.0 485.0L1010.0 490.0L1008.0 494.0Z" fill="#8484b6"/>
<g clip-path="url(#mesh)">
<path d="M393 238Q520 258 705 287" fill="none" stroke="#9c9cd0" stroke-width="7" opacity=".5" filter="url(#b2)"/>
<path d="M393 246Q520 268 700 298" fill="none" stroke="#6c6ca2" stroke-width="3" opacity=".45" filter="url(#b2)"/>
<path d="M400 231Q520 249 700 277" fill="none" stroke="#7272a8" stroke-width="2" opacity=".35" filter="url(#b2)"/>
<path d="M400 222Q440 214 470 226Q440 240 404 236Z" fill="#9a9ace" opacity=".5" filter="url(#b5)"/>
<path d="M598 300L640 296L742 493L650 493Z" fill="#7474aa" opacity=".4" filter="url(#b5)"/>
<path d="M622 300L722 493" fill="none" stroke="#9c9cd0" stroke-width="4" opacity=".45" filter="url(#b2)"/>
<path d="M606 308L690 493" fill="none" stroke="#6a6aa0" stroke-width="3" opacity=".4" filter="url(#b2)"/>
<g stroke="#9a9ace" stroke-width="2" opacity=".35" filter="url(#b2)"><path d="M660 400l40-14M668 420l44-14M676 440l46-14M684 460l46-14M640 360l34-12"/></g>
<path d="M612 100L655 100L775 228L748 238Z" fill="#7070a6" opacity=".38" filter="url(#b5)"/>
<path d="M905 108Q950 112 985 140L960 152Q930 138 900 128Z" fill="#7070a6" opacity=".4" filter="url(#b5)"/>
<ellipse cx="1080" cy="287" rx="26" ry="15" fill="#9e9ed2" opacity=".55" filter="url(#b5)"/>
<ellipse cx="1120" cy="330" rx="30" ry="22" fill="#7676ac" opacity=".3" filter="url(#b9)"/>
<ellipse cx="1050" cy="215" rx="40" ry="14" fill="#7878ae" opacity=".3" filter="url(#b5)" transform="rotate(35 1050 215)"/>
<circle cx="980" cy="266" r="80" fill="none" stroke="#7474aa" stroke-width="1" opacity=".16"/>
<rect x="355" y="97" width="800" height="396" filter="url(#grain)" opacity=".3"/>
</g>
<path d="M415 166L383 172L373.4 492" stroke="#dba9a4" stroke-width="1.1" fill="none" opacity=".9"/>
<circle cx="756" cy="293" r="59" fill="url(#ball)"/>
<ellipse cx="757" cy="297" rx="59" ry="51" fill="none" stroke="#c8607a" stroke-width="1" opacity=".55"/>
<path d="M697 298A59 33 0 0 0 815 294" fill="none" stroke="#5a5ac8" stroke-width="1.1" opacity=".7"/>
<path d="M697 298A59 33 0 0 1 815 294" fill="none" stroke="#7a7ad0" stroke-width="1" opacity=".18"/>
<path d="M775 237L776 351" stroke="#9fd39a" stroke-width="1.2" opacity=".45"/>
<use href="#mk" x="569" y="120"/>
<use href="#mk" x="489" y="148.6"/>
<use href="#mk" x="582" y="155"/>
<use href="#mk" x="659" y="144"/>
<use href="#mk" x="697" y="104"/>
<use href="#mk" x="755" y="150"/>
<use href="#mk" x="887" y="131"/>
<use href="#mk" x="672" y="184"/>
<use href="#mk" x="705" y="175"/>
<use href="#mk" x="844" y="179"/>
<use href="#mk" x="543" y="198"/>
<use href="#mk" x="757" y="220"/>
<use href="#mk" x="870" y="230"/>
<use href="#mk" x="463" y="239"/>
<use href="#mk" x="610" y="241"/>
<use href="#mk" x="777" y="254"/>
<use href="#mk" x="689" y="266"/>
<use href="#mk" x="522" y="292"/>
<use href="#mk" x="609" y="293"/>
<use href="#mk" x="694" y="297"/>
<use href="#mk" x="767" y="298"/>
<use href="#mk" x="503" y="344"/>
<use href="#mk" x="1141" y="341"/>
<use href="#mk" x="1143" y="369"/>
<use href="#mk" x="546" y="408"/>
<use href="#mk" x="652" y="423"/>
<use href="#mk" x="920" y="429"/>
<use href="#mkf" x="516.5" y="486.5"/>
<g font-family="'Liberation Sans',sans-serif" font-size="11" letter-spacing="-.45" fill="#0a0a14">
<text x="584.6" y="113.0">90</text>
<text x="504.6" y="141.6">10</text>
<text x="597.6" y="148.0">100</text>
<text x="674.6" y="137.0">180</text>
<text x="770.6" y="143.0">270</text>
<text x="902.6" y="124.0">420</text>
<text x="687.6" y="177.0">190</text>
<text x="720.6" y="168.0">252</text>
<text x="859.6" y="172.0">350</text>
<text x="558.6" y="191.0">20</text>
<text x="772.6" y="213.0">30</text>
<text x="885.6" y="223.0">360</text>
<text x="478.6" y="232.0">8000</text>
<text x="625.6" y="234.0">120</text>
<text x="792.6" y="247.0">282</text>
<text x="704.6" y="259.0">210</text>
<text x="537.6" y="285.0">50</text>
<text x="624.6" y="286.0">130</text>
<text x="709.6" y="290.0" fill="#3c3c50">220</text>
<text x="782.6" y="291.0" fill="#3c3c50">5000</text>
<text x="518.6" y="337.0">60</text>
<text x="561.6" y="401.0">12000</text>
<text x="667.6" y="416.0">150</text>
<text x="935.6" y="422.0">11000</text>
<text x="532.1" y="479.5">70</text>
</g>
<path d="M1099.5 437V409" stroke="#1414d8" stroke-width="2"/><path d="M1100 437L1136 428.5" stroke="#18c02c" stroke-width="2"/><path d="M1099.5 437L1113 460" stroke="#d81818" stroke-width="2"/>
<g font-family="'Liberation Sans',sans-serif" font-size="11" fill="#000"><text x="1098" y="406">Z</text><text x="1140" y="429">Y</text><text x="1113" y="466">X</text></g>
<g font-family="'Liberation Sans',sans-serif" font-size="11" fill="#1a1ae0"><text x="363.5" y="116.6" letter-spacing="-.12">Perspective 30°</text><text x="363.5" y="482">faces: 14,864,095 vertices: 7,440,994</text></g>
</g></svg>

<!-- ===== photos dock ===== -->
<div class="a dockhead" style="left:353px;top:501px;width:805px;height:18px;"></div>
<div class="t" style="left:354px;top:504px;font-size:11.3px;letter-spacing:-.53px;">Photos</div>
<div class="a sep" style="left:424px;top:525px;height:18px;"></div>
<div class="a sep" style="left:475px;top:525px;height:18px;"></div>
<svg class="a" style="left:353px;top:520px;" width="220" height="28" viewBox="353 520 220 28">
<defs><radialGradient id="gGry" cx=".4" cy=".35" r=".75"><stop offset="0" stop-color="#d6d6d6"/><stop offset="1" stop-color="#a4a4a4"/></radialGradient></defs>
<circle cx="366" cy="534" r="6.8" fill="url(#gGry)" stroke="#a0a0a0" stroke-width=".8"/><path d="M362.4 534.200l2.6 2.8 4.8-5.4" fill="none" stroke="#f4f4f4" stroke-width="1.9" stroke-linecap="round" stroke-linejoin="round"/>
<circle cx="388" cy="534" r="6.8" fill="url(#gGry)" stroke="#a0a0a0" stroke-width=".8"/><rect x="383.8" y="532.5" width="8.4" height="3" rx=".8" fill="#f6f6f6"/>
<path d="M405 528.400l11.5 11.500M416.5 528.400l-11.5 11.5" stroke="#666" stroke-width="1.7" stroke-linecap="round"/>
<path d="M431.5 541v-7l5.5 3.5 1.5-1.500V541z" fill="#d8d8d8" stroke="#a8a8a8" stroke-width=".9"/><path d="M441.5 541l1.8-12.5 3.2 12.500z" fill="#e2e2e2" stroke="#a8a8a8" stroke-width=".9"/><path d="M434 530.500a4 4 0 0 1 6-1" fill="none" stroke="#a4a4a4" stroke-width="1.8"/><path d="M432.5 528.500l.5 4 3.5-1.800z" fill="#a4a4a4"/>
<path d="M469.5 541v-7l-5.5 3.5-1.5-1.500V541z" fill="#d8d8d8" stroke="#a8a8a8" stroke-width=".9"/><path d="M459.5 541l-1.8-12.5-3.2 12.500z" fill="#e2e2e2" stroke="#a8a8a8" stroke-width=".9"/><path d="M467 530.500a4 4 0 0 0-6-1" fill="none" stroke="#a4a4a4" stroke-width="1.8"/><path d="M468.5 528.500l-.5 4-3.5-1.800z" fill="#a4a4a4"/>
<g fill="#b4b4b4" stroke="#8e8e8e" stroke-width=".8"><path d="M483.5 541v-7l1.5-3v-3.500h4v3.500l.5 3v7z"/><path d="M491.5 541v-7l.5-3v-3.500h4v3.500l1.5 3v7z"/><rect x="488.5" y="531.5" width="4" height="4"/></g><path d="M484.5 537.500h4M492.5 537.500h4" stroke="#dedede" stroke-width="2"/>
<rect x="504.5" y="526.5" width="14.5" height="14.5" fill="#b6dcfb" stroke="#7cc0f4" stroke-width="1"/><circle cx="511.8" cy="533.8" r="4.3" fill="#e8f4fe" stroke="#4a9fe8" stroke-width="1.4"/><path d="M507 529h2M514.5 529h2" stroke="#4a9fe8" stroke-width="1"/>
<rect x="527.5" y="526.5" width="4" height="4" rx=".9" fill="#b6d650"/>
<rect x="532.7" y="526.5" width="4" height="4" rx=".9" fill="#5aa8e8"/>
<rect x="537.9" y="526.5" width="4" height="4" rx=".9" fill="#f0a458"/>
<rect x="527.5" y="531.7" width="4" height="4" rx=".9" fill="#b07ae0"/>
<rect x="532.7" y="531.7" width="4" height="4" rx=".9" fill="#ee8a5c"/>
<rect x="537.9" y="531.7" width="4" height="4" rx=".9" fill="#5abce0"/>
<rect x="527.5" y="536.9" width="4" height="4" rx=".9" fill="#90c856"/>
<rect x="532.7" y="536.9" width="4" height="4" rx=".9" fill="#5aa2e8"/>
<rect x="537.9" y="536.9" width="4" height="4" rx=".9" fill="#f08464"/>
<path d="M548 532h8.400l-4.2 4.400z" fill="#111"/>
</svg>
<svg class="a" style="left:1126px;top:502px;" width="32" height="16" viewBox="1126 502 32 16"><path d="M1131.5 506.500h5v4h-5z" fill="#fff" stroke="#111" stroke-width="1.1"/><path d="M1131.5 507.300h5" stroke="#111" stroke-width="1.1"/><path d="M1129.5 509.500h5v4.500h-5z" fill="#fff" stroke="#111" stroke-width="1.1"/><path d="M1129.5 510.300h5" stroke="#111" stroke-width="1.1"/><path d="M1145.5 506.500l6.5 6.500M1152 506.500l-6.5 6.5" stroke="#111" stroke-width="1.6"/></svg>
<div class="a white" style="left:353px;top:547px;width:805px;height:125px;border-left-color:#a0a0a0;"></div>
<svg class="a" style="left:354px;top:548px;" width="786" height="123" viewBox="354 548 786 123">
<defs><filter id="tb3" x="-.5" y="-.5" width="2" height="2"><feGaussianBlur stdDeviation="2.6"/></filter>
<radialGradient id="vig" cx=".5" cy=".5" r=".75"><stop offset=".45" stop-color="#2a1c20" stop-opacity="0"/><stop offset="1" stop-color="#2a1c20" stop-opacity=".36"/></radialGradient>
<filter id="tgrain" x="0" y="0" width="1" height="1"><feTurbulence type="fractalNoise" baseFrequency=".55" numOctaves="2" seed="7"/><feColorMatrix type="matrix" values="0 0 0 0 .15  0 0 0 0 .12  0 0 0 0 .1  0 0 0 -2.2 1.2"/></filter>
<clipPath id="tc"><rect width="97" height="64"/></clipPath>
<clipPath id="f0"><path d="M66 0h31v64H58.400l1-25.300 3.300-15.700z"/></clipPath>
<clipPath id="f1"><path d="M97 4V64H85l1-14 5-25z"/></clipPath>
<filter id="tb2" x="-.5" y="-.5" width="2" height="2"><feGaussianBlur stdDeviation="2.300"/></filter>
<filter id="forest" x="0" y="0" width="1" height="1"><feTurbulence type="fractalNoise" baseFrequency=".16" numOctaves="3" seed="11"/><feColorMatrix type="matrix" values="0 0 0 0 .38  0 0 0 0 .42  0 0 0 0 .27  2.200 0 0 0 -1.250"/></filter>
<linearGradient id="vigtl" x1="0" y1="0" x2=".6" y2=".8"><stop offset="0" stop-color="#3a282c" stop-opacity=".42"/><stop offset=".5" stop-color="#3a282c" stop-opacity="0"/></linearGradient></defs>
<g transform="translate(366.0 574.5)" clip-path="url(#tc)"><rect width="97" height="64" fill="#c0a198"/><g filter="url(#tb2)" stroke="#8a6c6a" stroke-width="7" stroke-linecap="round" opacity="0.38"><path d="M6.0 60.0l21.2 -34.0"/><path d="M2.0 30.0l13.8 -22.1"/></g><g filter="url(#tb2)" stroke="#ceb2a8" stroke-width="6" stroke-linecap="round" opacity="0.5"><path d="M22.0 50.0l23.3 -37.4"/><path d="M36.0 30.0l15.9 -25.5"/></g><path d="M64.500 0h4L58.400 64H32.700z" fill="#6d6d5a"/><path d="M66 0h31v64H58.400l1-25.300 3.300-15.700z" fill="#3a422d"/><g clip-path="url(#f0)"><rect width="97" height="64" filter="url(#forest)"/></g><rect width="97" height="64" fill="url(#vig)"/><rect width="97" height="64" fill="url(#vigtl)"/><rect width="97" height="64" filter="url(#tgrain)" opacity=".12"/></g>
<g transform="translate(447.5 560.3)"><path d="M1 2.500c1.5-2.6 5-2 5.8.6 3-.600 7.2 2 7.2 6.2 0 3.6-3 5.7-6 5.7-3.6 0-5.8-2.6-5.6-5.600C1 7.4-.2 4.6 1 2.500z" fill="#5aa82c"/><path d="M2.6 3.400c1-1.4 2.8-.8 3.2.8.6 1.6 1.4 1.6 2.6 1.6 2.4.2 4 2 3.8 4.2-.2 2.2-2 3.4-4 3.4-2.4 0-4-1.8-3.8-4C4.4 7.4 1.8 5.4 2.6 3.400z" fill="#d8d83a"/><circle cx="8.4" cy="9.6" r="2.9" fill="#f08a28"/><circle cx="8.6" cy="9.8" r="1.5" fill="#d82a1c"/><circle cx="3.9" cy="4" r="1" fill="#f0a030"/></g>
<g transform="translate(475.5 574.5)" clip-path="url(#tc)"><rect width="97" height="64" fill="#c0a198"/><g filter="url(#tb2)" stroke="#8a6c6a" stroke-width="6" stroke-linecap="round" opacity="0.36"><path d="M4.0 40.0l21.2 -34.0"/><path d="M26.0 34.0l18.0 -28.9"/><path d="M40.0 24.0l12.7 -20.4"/><path d="M30.0 58.0l11.7 -18.7"/></g><g filter="url(#tb2)" stroke="#ceb2a8" stroke-width="7" stroke-linecap="round" opacity="0.45"><path d="M52.0 60.0l31.8 -51.0"/><path d="M14.0 60.0l15.9 -25.5"/><path d="M70.0 40.0l19.1 -30.6"/></g><path d="M95.400 0H97V64H66.200L89.400 30z" fill="#706e5c"/><path d="M97 4V64H85l1-14 5-25z" fill="#3d4530"/><g clip-path="url(#f1)"><rect width="97" height="64" filter="url(#forest)"/></g><rect width="97" height="64" fill="url(#vig)"/><rect width="97" height="64" fill="url(#vigtl)"/><rect width="97" height="64" filter="url(#tgrain)" opacity=".12"/></g>
<g transform="translate(557.0 560.3)"><path d="M1 2.500c1.5-2.6 5-2 5.8.6 3-.600 7.2 2 7.2 6.2 0 3.6-3 5.7-6 5.7-3.6 0-5.8-2.6-5.6-5.600C1 7.4-.2 4.6 1 2.500z" fill="#5aa82c"/><path d="M2.6 3.400c1-1.4 2.8-.8 3.2.8.6 1.6 1.4 1.6 2.6 1.6 2.4.2 4 2 3.8 4.2-.2 2.2-2 3.4-4 3.4-2.4 0-4-1.8-3.8-4C4.4 7.4 1.8 5.4 2.6 3.400z" fill="#d8d83a"/><circle cx="8.4" cy="9.6" r="2.9" fill="#f08a28"/><circle cx="8.6" cy="9.8" r="1.5" fill="#d82a1c"/><circle cx="3.9" cy="4" r="1" fill="#f0a030"/></g>
<g transform="translate(585.0 574.5)" clip-path="url(#tc)"><rect width="97" height="64" fill="#c0a198"/><g filter="url(#tb2)" stroke="#8a6c6a" stroke-width="6" stroke-linecap="round" opacity="0.36"><path d="M4.0 44.0l21.2 -34.0"/><path d="M36.0 30.0l15.9 -25.5"/><path d="M50.0 22.0l11.7 -18.7"/><path d="M40.0 58.0l12.7 -20.4"/><path d="M76.0 18.0l8.5 -13.6"/></g><g filter="url(#tb2)" stroke="#ceb2a8" stroke-width="7" stroke-linecap="round" opacity="0.45"><path d="M60.0 62.0l31.8 -51.0"/><path d="M20.0 60.0l15.9 -25.5"/></g><path d="M0 40Q14 44 18 64H0z" fill="#9a7878" opacity=".6" filter="url(#tb2)"/><path d="M97 46V64H84z" fill="#504e40"/><rect width="97" height="64" fill="url(#vig)"/><rect width="97" height="64" fill="url(#vigtl)"/><rect width="97" height="64" filter="url(#tgrain)" opacity=".12"/></g>
<g transform="translate(666.5 560.3)"><path d="M1 2.500c1.5-2.6 5-2 5.8.6 3-.600 7.2 2 7.2 6.2 0 3.6-3 5.7-6 5.7-3.6 0-5.8-2.6-5.6-5.600C1 7.4-.2 4.6 1 2.500z" fill="#5aa82c"/><path d="M2.6 3.400c1-1.4 2.8-.8 3.2.8.6 1.6 1.4 1.6 2.6 1.6 2.4.2 4 2 3.8 4.2-.2 2.2-2 3.4-4 3.4-2.4 0-4-1.8-3.8-4C4.4 7.4 1.8 5.4 2.6 3.400z" fill="#d8d83a"/><circle cx="8.4" cy="9.6" r="2.9" fill="#f08a28"/><circle cx="8.6" cy="9.8" r="1.5" fill="#d82a1c"/><circle cx="3.9" cy="4" r="1" fill="#f0a030"/></g>
<g transform="translate(694.5 574.5)" clip-path="url(#tc)"><rect width="97" height="64" fill="#c0a198"/><g filter="url(#tb2)" stroke="#8a6c6a" stroke-width="6" stroke-linecap="round" opacity="0.34"><path d="M40.0 26.0l10.6 -17.0"/><path d="M58.0 30.0l9.5 -15.3"/><path d="M78.0 26.0l11.7 -18.7"/><path d="M60.0 60.0l10.6 -17.0"/><path d="M24.0 26.0l8.5 -13.6"/></g><g filter="url(#tb2)" stroke="#ceb2a8" stroke-width="7" stroke-linecap="round" opacity="0.4"><path d="M30.0 62.0l26.5 -42.5"/><path d="M70.0 62.0l15.9 -25.5"/></g><path d="M10 40Q40 44 44 64H6z" fill="#a98688" opacity=".5" filter="url(#tb2)"/><path d="M0 0h24L0 30z" fill="#77775c"/><path d="M23 0h4L0 35v-5z" fill="#2c3124"/><path d="M27.500 0h2L0 38v-2.500z" fill="#c2b2a2"/><rect width="97" height="64" fill="url(#vig)"/><rect width="97" height="64" filter="url(#tgrain)" opacity=".12"/></g>
<g transform="translate(776.0 560.3)"><path d="M1 2.500c1.5-2.6 5-2 5.8.6 3-.600 7.2 2 7.2 6.2 0 3.6-3 5.7-6 5.7-3.6 0-5.8-2.6-5.6-5.600C1 7.4-.2 4.6 1 2.500z" fill="#5aa82c"/><path d="M2.6 3.400c1-1.4 2.8-.8 3.2.8.6 1.6 1.4 1.6 2.6 1.6 2.4.2 4 2 3.8 4.2-.2 2.2-2 3.4-4 3.4-2.4 0-4-1.8-3.8-4C4.4 7.4 1.8 5.4 2.6 3.400z" fill="#d8d83a"/><circle cx="8.4" cy="9.6" r="2.9" fill="#f08a28"/><circle cx="8.6" cy="9.8" r="1.5" fill="#d82a1c"/><circle cx="3.9" cy="4" r="1" fill="#f0a030"/></g>
<g transform="translate(804.0 574.5)" clip-path="url(#tc)"><rect width="97" height="64" fill="#c0a198"/><g filter="url(#tb2)" stroke="#8a6c6a" stroke-width="5" stroke-linecap="round" opacity="0.32"><path d="M62.0 30.0l7.4 -11.9"/><path d="M82.0 26.0l7.4 -11.9"/><path d="M70.0 56.0l7.4 -11.9"/></g><g filter="url(#tb2)" stroke="#ceb2a8" stroke-width="7" stroke-linecap="round" opacity="0.4"><path d="M40.0 62.0l21.2 -34.0"/><path d="M66.0 50.0l21.2 -34.0"/></g><path d="M40 40Q70 44 76 64H30z" fill="#a98688" opacity=".4" filter="url(#tb2)"/><path d="M0 0h42L0 56z" fill="#908d76"/><path d="M40 0h5L0 61v-6z" fill="#3a4030"/><path d="M45.500 0h2.500L0 64v-2.500z" fill="#c2b2a2"/><rect width="97" height="64" fill="url(#vig)"/><rect width="97" height="64" filter="url(#tgrain)" opacity=".12"/></g>
<g transform="translate(885.5 560.3)"><path d="M1 2.500c1.5-2.6 5-2 5.8.6 3-.600 7.2 2 7.2 6.2 0 3.6-3 5.7-6 5.7-3.6 0-5.8-2.6-5.6-5.600C1 7.4-.2 4.6 1 2.500z" fill="#5aa82c"/><path d="M2.6 3.400c1-1.4 2.8-.8 3.2.8.6 1.6 1.4 1.6 2.6 1.6 2.4.2 4 2 3.8 4.2-.2 2.2-2 3.4-4 3.4-2.4 0-4-1.8-3.8-4C4.4 7.4 1.8 5.4 2.6 3.400z" fill="#d8d83a"/><circle cx="8.4" cy="9.6" r="2.9" fill="#f08a28"/><circle cx="8.6" cy="9.8" r="1.5" fill="#d82a1c"/><circle cx="3.9" cy="4" r="1" fill="#f0a030"/></g>
<g transform="translate(913.5 574.5)" clip-path="url(#tc)"><rect width="97" height="64" fill="#c0a198"/><g filter="url(#tb2)" stroke="#8a6c6a" stroke-width="5" stroke-linecap="round" opacity="0.32"><path d="M84.0 20.0l5.3 -8.5"/></g><g filter="url(#tb2)" stroke="#ceb2a8" stroke-width="7" stroke-linecap="round" opacity="0.4"><path d="M60.0 62.0l19.1 -30.6"/></g><path d="M0 0h70L30 64H0z" fill="#908d76"/><path d="M67 0h6L34 64h-6z" fill="#3a4030"/><path d="M73.500 0h2.500L37 64h-2.500z" fill="#c2b2a2"/><g stroke="#767862" stroke-width="1.5" opacity=".55"><path d="M20 0L0 30M34 0L0 52M48 0L8 64M58 0L18 64"/></g><rect width="97" height="64" fill="url(#vig)"/><rect width="97" height="64" filter="url(#tgrain)" opacity=".12"/></g>
<g transform="translate(995.0 560.3)"><path d="M1 2.500c1.5-2.6 5-2 5.8.6 3-.600 7.2 2 7.2 6.2 0 3.6-3 5.7-6 5.7-3.6 0-5.8-2.6-5.6-5.600C1 7.4-.2 4.6 1 2.500z" fill="#5aa82c"/><path d="M2.6 3.400c1-1.4 2.8-.8 3.2.8.6 1.6 1.4 1.6 2.6 1.6 2.4.2 4 2 3.8 4.2-.2 2.2-2 3.4-4 3.4-2.4 0-4-1.8-3.8-4C4.4 7.4 1.8 5.4 2.6 3.400z" fill="#d8d83a"/><circle cx="8.4" cy="9.6" r="2.9" fill="#f08a28"/><circle cx="8.6" cy="9.8" r="1.5" fill="#d82a1c"/><circle cx="3.9" cy="4" r="1" fill="#f0a030"/></g>
<g transform="translate(1023.0 574.5)" clip-path="url(#tc)"><rect width="97" height="64" fill="#969482"/><g stroke="#707160" stroke-width="1.8" opacity=".6"><path d="M14 0L0 40M30 0L6 64M44 0L22 64M58 0L38 64M72 0L54 64M84 0L68 64"/></g><g stroke="#aeac9a" stroke-width="1.5" opacity=".6"><path d="M22 0L0 58M37 0L14 64M51 0L30 64M65 0L46 64M78 0L61 64"/></g><path d="M97 4V64H83z" fill="#3a4030" opacity=".85"/><path d="M97 30V64h-6z" fill="#c0a198"/><rect width="97" height="64" fill="url(#vig)"/><rect width="97" height="64" filter="url(#tgrain)" opacity=".12"/></g>
<g transform="translate(1104.5 560.3)"><path d="M1 2.500c1.5-2.6 5-2 5.8.6 3-.600 7.2 2 7.2 6.2 0 3.6-3 5.7-6 5.7-3.6 0-5.8-2.6-5.6-5.600C1 7.4-.2 4.6 1 2.500z" fill="#5aa82c"/><path d="M2.6 3.400c1-1.4 2.8-.8 3.2.8.6 1.6 1.4 1.6 2.6 1.6 2.4.2 4 2 3.8 4.2-.2 2.2-2 3.4-4 3.4-2.4 0-4-1.8-3.8-4C4.4 7.4 1.8 5.4 2.6 3.400z" fill="#d8d83a"/><circle cx="8.4" cy="9.6" r="2.9" fill="#f08a28"/><circle cx="8.6" cy="9.8" r="1.5" fill="#d82a1c"/><circle cx="3.9" cy="4" r="1" fill="#f0a030"/></g>
</svg>
<div class="t" style="left:366.0px;top:656px;width:97px;text-align:center;font-size:11.300px;letter-spacing:-.42px;">IMG_0083.JPG</div>
<div class="t" style="left:475.5px;top:656px;width:97px;text-align:center;font-size:11.300px;letter-spacing:-.42px;">IMG_0084.JPG</div>
<div class="t" style="left:585.0px;top:656px;width:97px;text-align:center;font-size:11.300px;letter-spacing:-.42px;">IMG_0085.JPG</div>
<div class="t" style="left:694.5px;top:656px;width:97px;text-align:center;font-size:11.300px;letter-spacing:-.42px;">IMG_0086.JPG</div>
<div class="t" style="left:804.0px;top:656px;width:97px;text-align:center;font-size:11.300px;letter-spacing:-.42px;">IMG_0087.JPG</div>
<div class="t" style="left:913.5px;top:656px;width:97px;text-align:center;font-size:11.300px;letter-spacing:-.42px;">IMG_0088.JPG</div>
<div class="t" style="left:1023.0px;top:656px;width:97px;text-align:center;font-size:11.300px;letter-spacing:-.42px;">IMG_0089.JPG</div>
<div class="a" style="left:1140px;top:548px;width:17px;height:123px;background:#f0f0f0;"></div>
<div class="a" style="left:1141px;top:566px;width:15px;height:16px;box-sizing:border-box;border:1px solid #9a9a9a;border-radius:2px;background:linear-gradient(90deg,#f4f4f4 0,#e8e8e8 45%,#d4d4d4 50%,#dedede 100%);"></div>
<svg class="a" style="left:1140px;top:548px;" width="17" height="18" viewBox="1140 548 17 18"><path d="M1148.5 554.500l3.8 4.200h-7.600z" fill="#333"/></svg>
<div class="a tab off" style="left:355px;top:672px;width:57px;height:19px;border-top:none;"></div>
<div class="t" style="left:363.5px;top:675px;font-size:11.3px;letter-spacing:-.64px;">Console</div>
<div class="a tab on" style="left:411px;top:671px;width:58px;height:22px;border-top-color:#8e8f8f;"></div>
<div class="t" style="left:424.5px;top:676px;font-size:11.3px;letter-spacing:-.4px;">Photos</div>

<div class="a" style="left:122px;top:696px;width:1036px;height:16px;background:linear-gradient(rgba(228,240,246,0),rgba(226,238,245,.9));"></div>
<svg class="a" style="left:1146px;top:700px;" width="12" height="12" viewBox="0 0 12 12"><g fill="#b8b8b8"><rect x="8" y="8" width="2" height="2"/><rect x="8" y="4" width="2" height="2"/><rect x="4" y="8" width="2" height="2"/><rect x="8" y="0" width="2" height="2"/><rect x="4" y="4" width="2" height="2"/><rect x="0" y="8" width="2" height="2"/></g></svg>
<svg class="a" style="left:980px;top:600px;" width="300" height="120" viewBox="980 600 300 120">
<defs><linearGradient id="fire" x1="0" y1="0" x2="0" y2="1"><stop offset="0" stop-color="#ff6a00"/><stop offset=".45" stop-color="#ff9800"/><stop offset=".8" stop-color="#ffd21a"/><stop offset="1" stop-color="#ffe640"/></linearGradient></defs>
<g fill="#3fbf98" opacity=".42"><path d="M1057.5 649h32l-3 8.500h-32z"/><path d="M1089.5 649h15l-3 8.500h-15z" opacity=".55"/><path d="M1052 671.500h16.500l-3.5 9.500h-16.500z"/><path d="M1069 676h43l-6 18h-43z"/><path d="M1060.5 703.500h25l-5.5 16.500h-25z"/></g>
<text x="1131" y="696.7" font-family="'Liberation Sans',sans-serif" font-weight="bold" font-size="35.5" textLength="114" lengthAdjust="spacingAndGlyphs" fill="#6c6c6c">FILECR</text>
<text x="1233" y="711.5" font-family="'Liberation Sans',sans-serif" font-weight="bold" font-size="17" fill="#737373">.com</text>
<text x="1104.5" y="663.5" font-family="'Liberation Sans',sans-serif" font-weight="bold" font-size="23" fill="#4b5458">FILECR</text>
<text x="1180" y="677" font-family="'Liberation Sans',sans-serif" font-weight="bold" font-size="13" fill="#4a4a4a">.com</text>
<path d="M994.0 620.5L996.7 613.7L998.6 618.5L1001.2 613.8L1003.0 618.5L1007.5 611.6L1009.3 618.5L1011.8 612.4L1013.8 618.5L1016.2 613.7L1016.0 618.5L1016.0 620.5ZM1019.0 627.5L1023.6 618.5L1025.3 625.5L1028.7 620.4L1030.0 625.5L1030.0 627.5ZM1032.0 627.5L1036.2 618.8L1037.6 625.5L1041.7 620.7L1043.8 625.5L1046.7 619.5L1049.4 625.5L1053.5 620.7L1052.0 625.5L1052.0 627.5ZM1054.0 628.0L1057.4 619.9L1060.2 626.0L1064.9 619.8L1066.4 626.0L1070.1 620.0L1072.6 626.0L1075.3 620.2L1073.0 626.0L1073.0 628.0ZM1076.0 620.5L1078.2 611.6L1080.8 618.5L1083.0 612.1L1084.9 618.5L1087.9 612.6L1090.2 618.5L1094.1 613.4L1096.7 618.5L1099.2 612.1L1098.0 618.5L1098.0 620.5ZM1101.0 620.5L1103.7 611.8L1105.9 618.5L1108.5 611.3L1111.3 618.5L1114.3 613.3L1115.4 618.5L1118.6 613.3L1121.0 618.5L1123.0 612.6L1125.0 618.5L1125.0 620.5ZM1140.0 627.5L1144.5 618.3L1145.7 625.5L1148.4 618.1L1151.6 625.5L1155.0 618.1L1156.3 625.5L1159.7 618.2L1158.0 625.5L1158.0 627.5ZM1161.0 627.5L1164.1 620.1L1167.0 625.5L1170.0 620.6L1172.2 625.5L1175.1 620.0L1178.6 625.5L1181.5 620.5L1182.0 625.5L1182.0 627.5ZM1185.0 627.5L1187.4 620.1L1189.9 625.5L1193.3 619.7L1196.4 625.5L1198.5 620.8L1200.5 625.5L1203.2 620.6L1206.2 625.5L1210.4 620.3L1211.4 625.5L1214.5 619.4L1215.7 625.5L1218.8 618.0L1216.0 625.5L1216.0 627.5Z" fill="#ff7c0a" stroke="#6a1400" stroke-width="2.2" stroke-linejoin="round"/>
<text x="992" y="644.5" font-family="'Liberation Sans',sans-serif" font-weight="bold" font-size="38" letter-spacing=".5" fill="url(#fire)" stroke="#6a1400" stroke-width="4.5" stroke-linejoin="round" paint-order="stroke">CraxPC.com</text>
<text x="992" y="644.5" font-family="'Liberation Sans',sans-serif" font-weight="bold" font-size="38" letter-spacing=".5" fill="url(#fire)" stroke="#ff8a00" stroke-width="2" stroke-linejoin="round" paint-order="stroke">CraxPC.com</text>
</svg>
</body>
</html>
